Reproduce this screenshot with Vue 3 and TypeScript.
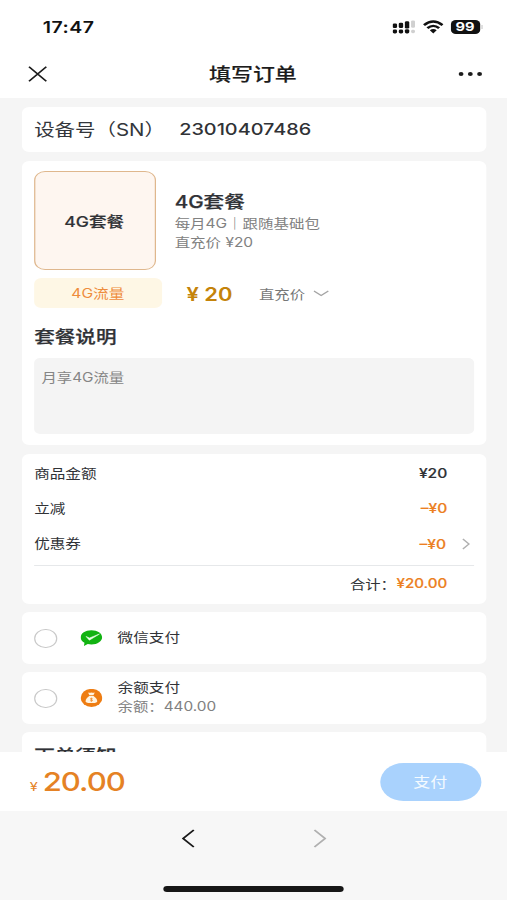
<script setup lang="ts">
import { ref } from 'vue'

interface FeeRow {
  label: string
  value: string
  discount: boolean
  link: boolean
}

const sn = '23010407486'
const fees: FeeRow[] = [
  { label: '商品金额', value: '¥20', discount: false, link: false },
  { label: '立减', value: '–¥0', discount: true, link: false },
  { label: '优惠券', value: '–¥0', discount: true, link: true },
]
const selected = ref<string>('')
</script>

<template>
  <div class="screen">
    <header class="top">
      <div class="status">
        <span class="time">17:47</span>
        <div class="status-icons">
          <svg class="signal" width="19" height="14" viewBox="0 0 19 14">
            <g fill="#111">
              <rect x="0.2" y="3.6" width="3.6" height="4.4" rx="1.2" />
              <rect x="5.2" y="2.8" width="3.6" height="5.2" rx="1.2" />
              <rect x="10.2" y="1.2" width="3.6" height="7.2" rx="1.2" />
              <rect x="0.2" y="9.6" width="3.6" height="3.8" rx="1.4" />
              <rect x="5.2" y="9.6" width="3.6" height="3.8" rx="1.4" />
              <rect x="10.2" y="9.2" width="3.6" height="4.2" rx="1.4" />
            </g>
            <g fill="#d0d0d0">
              <rect x="15.3" y="0.4" width="3.2" height="7.4" rx="1.2" />
              <rect x="15.3" y="9.8" width="3.2" height="3.4" rx="1.4" />
            </g>
          </svg>
          <svg class="wifi" width="17" height="14" viewBox="0 0 17 14">
            <g fill="none" stroke="#111" stroke-width="2.3">
              <path d="M0.9 5.1Q8.5 -2.1 16.1 5.1" />
              <path d="M3.7 8.2Q8.5 3.6 13.3 8.2" />
            </g>
            <path d="M5.7 10.3Q8.5 7.8 11.3 10.3L8.5 13.4Z" fill="#111" />
          </svg>
          <span class="battery">99</span>
          <i class="battery-cap"></i>
        </div>
      </div>
      <div class="nav">
        <svg width="16" height="16" viewBox="0 0 16 16">
          <path d="M0.8 0.8L15 15.2M15 0.8L0.8 15.2" fill="none" stroke="#1c1c1c" stroke-width="1.5" />
        </svg>
        <h1>填写订单</h1>
        <svg width="20" height="6" viewBox="0 0 20 6">
          <g fill="#1c1c1c">
            <circle cx="2.3" cy="3" r="2" />
            <circle cx="9.9" cy="3" r="2" />
            <circle cx="17.5" cy="3" r="2" />
          </g>
        </svg>
      </div>
    </header>

    <main class="body">
      <section class="card device">
        <span class="device-label">设备号（SN）</span>
        <span class="device-sn">{{ sn }}</span>
      </section>

      <section class="card plan">
        <div class="plan-top">
          <div class="plan-box">4G套餐</div>
          <div class="plan-info">
            <h2>4G套餐</h2>
            <p>每月4G｜跟随基础包</p>
            <p>直充价 ¥20</p>
          </div>
        </div>
        <div class="plan-price">
          <span class="tag">4G流量</span>
          <span class="price">¥ 20</span>
          <span class="kind">直充价</span>
          <svg width="13" height="7" viewBox="0 0 13 7">
            <path d="M0.6 1L6.5 5.5L12.4 1" fill="none" stroke="#a5a5a5" stroke-width="1.2" />
          </svg>
        </div>
        <h3>套餐说明</h3>
        <div class="desc">月享4G流量</div>
      </section>

      <section class="card fees">
        <div v-for="f in fees" :key="f.label" class="fee">
          <span>{{ f.label }}</span>
          <b :class="{ orange: f.discount, shifted: f.link }">{{ f.value }}</b>
          <svg v-if="f.link" class="fee-arrow" width="7" height="12" viewBox="0 0 7 12">
            <path d="M0.8 1L5.8 6L0.8 11" fill="none" stroke="#b0b0b0" stroke-width="1.2" />
          </svg>
        </div>
        <div class="total">
          <span>合计：</span>
          <b class="orange">¥20.00</b>
        </div>
      </section>

      <section class="card pay" @click="selected = 'wechat'">
        <i class="radio" :class="{ on: selected === 'wechat' }"></i>
        <svg class="pay-icon" width="18" height="18" viewBox="0 0 18 18">
          <path d="M9 1.2C4 1.2 0.2 4.3 0.2 8.3C0.2 10.6 1.4 12.5 3.3 13.8L2.9 16.9L6 15.1C7 15.4 8 15.5 9 15.5C14 15.5 17.8 12.3 17.8 8.3C17.8 4.3 14 1.2 9 1.2Z" fill="#12b312" />
          <path d="M4.6 7.4L7.4 9L15.6 5L7.3 11.2Z" fill="#e9ffe6" stroke="#e9ffe6" stroke-width="0.5" stroke-linejoin="round" />
        </svg>
        <div class="pay-text"><span>微信支付</span></div>
      </section>

      <section class="card pay balance" @click="selected = 'balance'">
        <i class="radio" :class="{ on: selected === 'balance' }"></i>
        <svg class="pay-icon" width="18" height="18" viewBox="0 0 18 18">
          <ellipse cx="9.1" cy="8.9" rx="8.9" ry="9" fill="#ee7d13" />
          <path d="M6.2 3.4Q7.6 4.2 9 3.4Q10.4 4.2 11.8 3.4L10.6 6.3H7.4Z" fill="#fff3e0" />
          <path d="M7.2 6.9H10.8Q14 9.7 13.7 12.3Q13.5 14 11.6 14H6.4Q4.5 14 4.3 12.3Q4 9.7 7.2 6.9Z" fill="#fff3e0" />
          <path d="M10 9.7Q9 9 8.3 9.6Q7.9 10.3 9 10.6Q10.3 11 9.8 11.7Q9.1 12.3 8 11.6M9 8.8V12.7" fill="none" stroke="#ee7d13" stroke-width="0.6" />
        </svg>
        <div class="pay-text">
          <span>余额支付</span>
          <small>余额：<em>440.00</em></small>
        </div>
      </section>

      <section class="card notice">
        <h3>下单须知</h3>
      </section>
    </main>

    <div class="checkout">
      <div class="amount"><small>¥</small><span>20.00</span></div>
      <button type="button">支付</button>
    </div>

    <footer class="browser">
      <div class="arrows">
        <svg width="11" height="19" viewBox="0 0 11 19">
          <path d="M10 1L1.3 9.5L10 18" fill="none" stroke="#1a1a1a" stroke-width="1.7" />
        </svg>
        <svg width="11" height="19" viewBox="0 0 11 19">
          <path d="M1 1L9.7 9.5L1 18" fill="none" stroke="#b0b0b0" stroke-width="1.7" />
        </svg>
      </div>
      <i class="home"></i>
    </footer>
  </div>
</template>

<style>
body {
  overflow: hidden;
  background: #f5f5f5;
}
</style>

<style scoped>
/* The layout is 416 units wide and stretched horizontally to the viewport. */
.screen {
  width: 416px;
  height: 900px;
  transform: scaleX(1.21875);
  transform-origin: 0 0;
  display: flex;
  flex-direction: column;
  overflow: hidden;
  background: #f5f5f5;
  color: #303236;
  font-family: Inter, 'Noto Sans CJK SC', sans-serif;
  font-size: 12.8px;
  box-sizing: border-box;
}
.screen * {
  box-sizing: border-box;
}
h1, h2, h3, p {
  margin: 0;
}
i, em {
  font-style: normal;
}
svg {
  display: block;
  flex: none;
}
.top {
  height: 97.5px;
  flex: none;
  background: #fff;
}
.status {
  height: 51px;
  padding: 3.5px 20.5px 0 35px;
  display: flex;
  align-items: center;
  justify-content: space-between;
}
.time {
  font-size: 16px;
  font-weight: 600;
  color: #111;
  letter-spacing: 0.4px;
  padding-bottom: 1px;
}
.status-icons {
  display: flex;
  align-items: center;
}
.wifi {
  margin-left: 5.5px;
}
.battery {
  margin-left: 6px;
  width: 24px;
  height: 14px;
  border-radius: 4px;
  background: #111;
  color: #fff;
  font-size: 12px;
  line-height: 14px;
  font-weight: 700;
  text-align: center;
}
.battery-cap {
  width: 1px;
  height: 4px;
  margin-left: 1px;
  background: #ccc;
}
.nav {
  height: 46px;
  padding: 0 20px 0 23px;
  display: flex;
  align-items: center;
  justify-content: space-between;
}
.nav h1 {
  font-size: 18px;
  font-weight: 500;
  line-height: 24px;
  padding-top: 1px;
  color: #1c1c1c;
  -webkit-text-stroke: 0.15px currentColor;
}
.body {
  height: 654px;
  flex: none;
  overflow: hidden;
  padding: 9px 17.2px 0 18px;
  display: flex;
  flex-direction: column;
}
.card {
  flex: none;
  background: #fff;
  border-radius: 6px;
  padding: 0 10px;
}
.device {
  height: 45px;
  display: flex;
  align-items: center;
  color: #33363b;
}
.device-label {
  font-size: 16.8px;
  width: 119px;
  white-space: nowrap;
  padding-bottom: 1px;
}
.device-sn {
  font-size: 16.3px;
  font-weight: 500;
  color: #303236;
}
.plan {
  margin-top: 9.5px;
  height: 284px;
  padding-top: 9.5px;
}
.plan-top {
  display: flex;
}
.plan-box {
  width: 99.5px;
  height: 99.5px;
  border: 1px solid #dfb78d;
  border-radius: 9px;
  background: #fef6f0;
  display: flex;
  align-items: center;
  justify-content: center;
  font-size: 14.4px;
  font-weight: 500;
  padding: 0 1px 0 0;
  -webkit-text-stroke: 0.15px currentColor;
}
.plan-info {
  padding: 19px 0 0 15.8px;
}
.plan-info h2 {
  font-size: 16.9px;
  font-weight: 500;
  line-height: 24px;
  -webkit-text-stroke: 0.25px currentColor;
}
.plan-info p {
  font-size: 12.7px;
  line-height: 19.5px;
  color: #818181;
}
.plan-price {
  margin-top: 8px;
  height: 30px;
  display: flex;
  align-items: center;
}
.tag {
  width: 104.5px;
  height: 30px;
  line-height: 31px;
  border-radius: 6px;
  background: #fef7e5;
  color: #ee8c3c;
  text-align: center;
}
.price {
  width: 59.5px;
  margin-left: 20.5px;
  padding-top: 2.5px;
  font-size: 18px;
  font-weight: 600;
  color: #c4830a;
  white-space: nowrap;
}
.kind {
  color: #777;
  margin-right: 7px;
  font-size: 12.6px;
}
h3 {
  font-size: 16.9px;
  font-weight: 500;
  line-height: 24px;
  -webkit-text-stroke: 0.25px currentColor;
}
.plan h3 {
  margin-top: 17px;
}
.desc {
  margin-top: 8.5px;
  height: 76px;
  padding: 10px 6px;
  border-radius: 5px;
  background: #f4f4f4;
  font-size: 12.6px;
  line-height: 20px;
  color: #858585;
}
.fees {
  margin-top: 9px;
  height: 149.5px;
  padding-top: 1px;
}
.fee {
  height: 35.3px;
  display: flex;
  align-items: center;
  padding-right: 21.8px;
  position: relative;
}
.fee b,
.total b {
  margin-left: auto;
  padding-top: 2px;
  font-weight: 500;
  font-size: 12.8px;
  -webkit-text-stroke: 0.15px currentColor;
}
.fee span {
  padding-bottom: 1px;
}
.fee b.shifted {
  margin-right: 1px;
}
.orange {
  color: #ec7f22;
}
.fee-arrow {
  position: absolute;
  right: 3px;
  top: 12px;
}
.total {
  margin-top: 4px;
  height: 37.5px;
  border-top: 1px solid #e6e8ea;
  display: flex;
  align-items: center;
  justify-content: flex-end;
  padding-right: 21.8px;
}
.total b {
  margin-left: 0.5px;
  padding: 0 0 1px;
  font-size: 12.4px;
}
.total span {
  padding-bottom: 2px;
  font-size: 12.6px;
}
.pay {
  margin-top: 8.5px;
  height: 51.5px;
  display: flex;
  align-items: center;
}
.radio {
  width: 18.5px;
  height: 18.5px;
  margin-top: 1.5px;
  border: 1px solid #c9c9c9;
  border-radius: 50%;
}
.radio.on {
  border: 5px solid #ee7d13;
}
.pay-icon {
  margin-left: 19.5px;
}
.pay-text {
  margin: 0 0 0 12.5px;
  display: flex;
  flex-direction: column;
  line-height: 19px;
}
.balance .pay-text {
  margin-bottom: 1.5px;
}
.pay-text small {
  font-size: 12.6px;
  color: #818181;
}
.notice {
  margin-top: 8.5px;
  height: 60px;
  padding-top: 12px;
}
.checkout {
  height: 59px;
  flex: none;
  background: #fff;
  padding: 1px 21.5px 0 24.5px;
  display: flex;
  align-items: center;
  justify-content: space-between;
}
.amount {
  display: flex;
  align-items: baseline;
  color: #e58224;
}
.amount small {
  font-size: 12px;
  width: 10.5px;
}
.amount span {
  font-size: 25.5px;
  font-weight: 500;
  letter-spacing: -0.8px;
}
.checkout button {
  width: 83px;
  height: 38px;
  padding: 0 0 1px;
  border: 0;
  border-radius: 19px;
  background: #a9d2fd;
  color: #f4faff;
  font: inherit;
  font-size: 14px;
}
.browser {
  flex: 1;
  background: #f7f7f7;
  display: flex;
  flex-direction: column;
  align-items: center;
  justify-content: space-between;
  padding: 18px 0 8px;
}
.arrows {
  display: flex;
  gap: 97px;
}
.home {
  width: 148px;
  height: 6px;
  border-radius: 3px;
  background: #161616;
}
</style>
